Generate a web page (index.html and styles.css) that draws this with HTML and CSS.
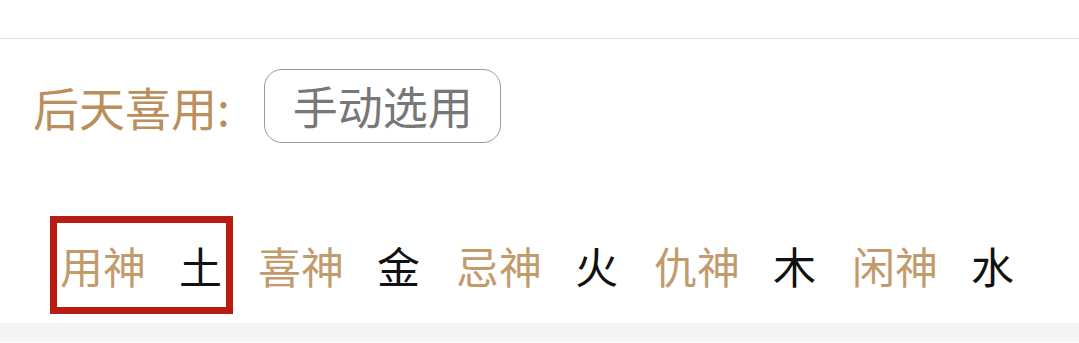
FILE: index.html
```html
<!DOCTYPE html>
<html lang="zh-CN">
<head>
    <meta charset="UTF-8">
    <meta name="viewport" content="width=device-width, initial-scale=1.0">
    <title>后天喜用</title>
    <link rel="stylesheet" href="styles.css">
</head>
<body>
    <div class="top-bar"></div>

    <div class="pick-row">
        <span class="pick-label">后天喜用:</span>
        <button class="pick-button">手动选用</button>
    </div>

    <div class="gods">
        <div class="god active"><span class="god-name">用神</span><span class="god-elem">土</span></div>
        <div class="god"><span class="god-name">喜神</span><span class="god-elem">金</span></div>
        <div class="god"><span class="god-name">忌神</span><span class="god-elem">火</span></div>
        <div class="god"><span class="god-name">仇神</span><span class="god-elem">木</span></div>
        <div class="god"><span class="god-name">闲神</span><span class="god-elem">水</span></div>
    </div>

    <div class="bottom-band"></div>
</body>
</html>
```

FILE: styles.css
```css
html, body {
    margin: 0;
    padding: 0;
    background: #fff;
    font-family: "Noto Sans CJK SC", "Noto Sans", sans-serif;
}
.top-bar {
    height: 38px;
    border-bottom: 1px solid #e0e0e0;
}
.pick-row {
    display: flex;
    align-items: center;
    padding: 30px 0 0 33px;
}
.pick-label {
    font-size: 46px;
    line-height: 46px;
    color: #bb8f5c;
    margin-right: 34px;
}
.pick-button {
    font-family: inherit;
    font-size: 45px;
    line-height: 46px;
    color: #777;
    background: #fff;
    border: 1px solid #999;
    border-radius: 18px;
    padding: 13px 27px 13px 28px;
}
.gods {
    display: flex;
    gap: 36px;
    margin-top: 80px;
    padding-left: 60px;
}
.god {
    display: flex;
    gap: 33px;
    font-size: 43px;
    line-height: 42px;
    padding: 21px 0;
}
.god.active {
    border: 7px solid #b81c12;
    padding: 21px 4px 21px 3px;
    margin: -7px -11px -7px -10px;
}
.god-name {
    color: #c29b6c;
}
.god-elem {
    color: #111;
}
.bottom-band {
    margin-top: 16px;
    height: 19px;
    background: #f5f5f5;
}
```
